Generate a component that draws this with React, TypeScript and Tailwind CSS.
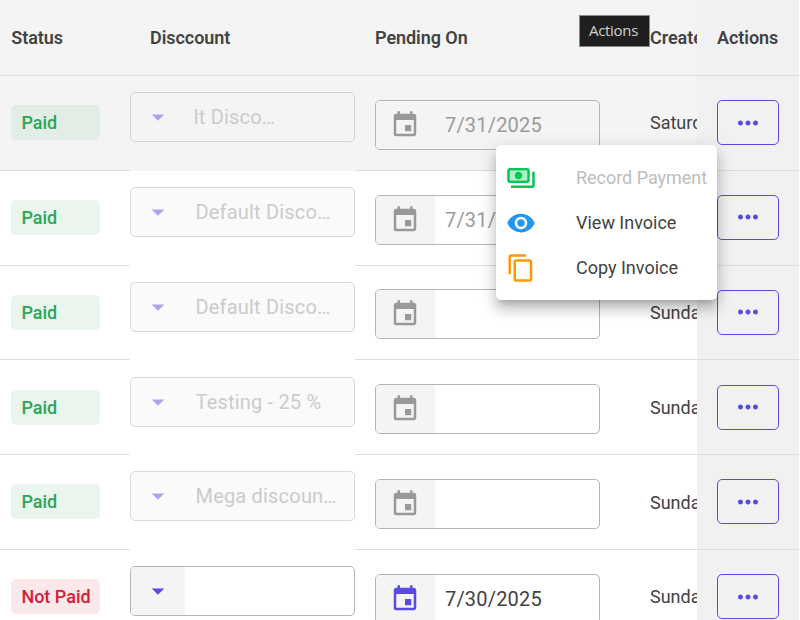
import React from "react";
import { MdEvent, MdVisibility, MdContentCopy, MdArrowDropDown, MdMoreHoriz } from "react-icons/md";

type Invoice = {
  paid: boolean;
  discount: string;
  pendingOn: string;
  created: string;
  hovered?: boolean;
};

const invoices: Invoice[] = [
  { paid: true, discount: "lt Disco…", pendingOn: "7/31/2025", created: "Saturday", hovered: true },
  { paid: true, discount: "Default Disco…", pendingOn: "7/31/2025", created: "Sunday" },
  { paid: true, discount: "Default Disco…", pendingOn: "", created: "Sunday" },
  { paid: true, discount: "Testing - 25 %", pendingOn: "", created: "Sunday" },
  { paid: true, discount: "Mega discoun…", pendingOn: "", created: "Sunday" },
  { paid: false, discount: "", pendingOn: "7/30/2025", created: "Sunday" },
];

const columns = "grid grid-cols-[130px_225px_275px_67px_102px]";

function PaymentsIcon() {
  return (
    <svg viewBox="0 0 24 24" className="size-[30px] text-[#00c853]" fill="currentColor">
      <path fillOpacity=".3" d="M17 6H3v8h14V6z" />
      <path d="M19 14V6c0-1.1-.9-2-2-2H3c-1.1 0-2 .9-2 2v8c0 1.1.9 2 2 2h14c1.1 0 2-.9 2-2zm-2 0H3V6h14v8zm-7-7c-1.66 0-3 1.34-3 3s1.34 3 3 3 3-1.34 3-3-1.34-3-3-3zm13 0v11c0 1.1-.9 2-2 2H4v-2h17V7h2z" />
    </svg>
  );
}

function DiscountField({ value, disabled, hovered }: { value: string; disabled: boolean; hovered?: boolean }) {
  return (
    <div
      className={`flex h-[50px] w-[225px] overflow-hidden rounded-[5px] border ${
        disabled ? (hovered ? "border-[#d4d4d4]" : "border-[#d9d9d9] bg-[#fafafa]") : "border-[#b5b5b5] bg-white"
      }`}
    >
      <div className={`flex w-[54px] items-center justify-center ${disabled ? "" : "bg-[#f4f4f4]"}`}>
        <MdArrowDropDown className={`size-[30px] ${disabled ? "text-[#aca3ef]" : "text-[#594ae2]"}`} />
      </div>
      <span
        className={`text-[20px] leading-[48px] tracking-[0.19px] whitespace-nowrap text-[#cbcbcb] ${
          hovered ? "pl-[8.8px]" : "pl-[10.5px]"
        }`}
      >
        {value}
      </span>
    </div>
  );
}

function DateField({ value, disabled, hovered }: { value: string; disabled: boolean; hovered?: boolean }) {
  return (
    <div className={`flex h-[50px] w-[225px] overflow-hidden rounded-[5px] border border-[#b5b5b5] ${hovered ? "" : "bg-white"}`}>
      <div className="flex w-[59px] items-center bg-[#f4f4f4] pl-[14px]">
        <MdEvent className={`size-[30px] ${disabled ? "text-[#999999]" : "text-[#594ae2]"}`} />
      </div>
      <span className={`pl-[10px] text-[20px] leading-[48px] tracking-[0.19px] ${disabled ? "text-[#9b9b9b]" : "text-[#424242]"}`}>
        {value}
      </span>
    </div>
  );
}

function InvoiceRow({ row }: { row: Invoice }) {
  return (
    <div className={`${columns} h-[94.8px] ${row.hovered ? "bg-[#f4f4f4]" : "bg-white"}`}>
      <div className="border-b border-[#dedede] pt-[29.2px] pl-[11px]">
        <div
          className={`h-[35px] w-[89px] rounded-[5px] pl-[10.4px] text-[18px] leading-[35px] font-medium ${
            row.paid
              ? row.hovered
                ? "bg-[#e1ede5] text-[#2ba656]"
                : "bg-[#eaf5ee] text-[#2ba656]"
              : "bg-[#fae8ea] text-[#d32035]"
          }`}
        >
          {row.paid ? "Paid" : "Not Paid"}
        </div>
      </div>
      <div className="pt-[16.2px]">
        <DiscountField value={row.discount} disabled={row.paid} hovered={row.hovered} />
      </div>
      <div className="border-b border-[#dedede] pt-[23.8px] pl-[20px]">
        <DateField value={row.pendingOn} disabled={row.paid} hovered={row.hovered} />
      </div>
      <div className="flex items-center overflow-hidden border-b border-[#dedede] pl-[20px] text-[18px] text-[#424242]">
        {row.created}
      </div>
      <div className="border-b border-[#dedede] bg-[#f1f1f1] pt-[24.2px] pl-[20px]">
        <button className="flex h-[45px] w-[62px] items-center justify-center rounded-[5px] border border-[#594ae2] text-[#594ae2]">
          <MdMoreHoriz className="size-[30px]" />
        </button>
      </div>
    </div>
  );
}

function ActionMenu() {
  return (
    <div className="absolute top-[145px] left-[496px] h-[155px] w-[221px] rounded-[5px] bg-white pt-[10px] text-[18px] text-[#424242] shadow-[0_6px_6px_-4px_rgba(0,0,0,0.2),0_10px_12px_1px_rgba(0,0,0,0.14),0_4px_18px_2px_rgba(0,0,0,0.12)]">
      <div className="flex h-[45px] items-center gap-[40px] pl-[10px] tracking-[-0.03px] whitespace-nowrap text-[#bdbdbd]">
        <PaymentsIcon />
        Record Payment
      </div>
      <div className="flex h-[45px] items-center gap-[40px] pl-[10px]">
        <MdVisibility className="size-[30px] text-[#2196f3]" />
        View Invoice
      </div>
      <div className="flex h-[45px] items-center gap-[40px] pl-[10px]">
        <MdContentCopy className="size-[30px] text-[#ff9800]" />
        Copy Invoice
      </div>
    </div>
  );
}

export default function App() {
  return (
    <div className="relative h-[620px] w-[799px] overflow-hidden bg-white font-['Roboto',sans-serif]">
      <div className={`${columns} h-[76px] bg-[#f4f4f4] text-[18px] leading-[75px] font-semibold tracking-[-0.05px] text-[#424242]`}>
        <div className="border-b border-[#dedede] pl-[11.3px]">Status</div>
        <div className="border-b border-[#dedede] pl-[20px]">Disccount</div>
        <div className="border-b border-[#dedede] pl-[20px]">Pending On</div>
        <div className="overflow-hidden border-b border-[#dedede] pl-[20px]">Created</div>
        <div className="border-b border-[#dedede] bg-[#f1f1f1] pl-[20px]">Actions</div>
      </div>
      {invoices.map((row, i) => (
        <InvoiceRow key={i} row={row} />
      ))}
      <div className="absolute top-[15px] left-[579px] flex h-[32px] w-[71px] items-center border border-[#8a8a8a] bg-[#1f1f1f] pb-[2px] pl-[9px] font-['Open_Sans',sans-serif] text-[15px] tracking-[-0.3px] text-[#d0d0d0]">
        Actions
      </div>
      <ActionMenu />
    </div>
  );
}
